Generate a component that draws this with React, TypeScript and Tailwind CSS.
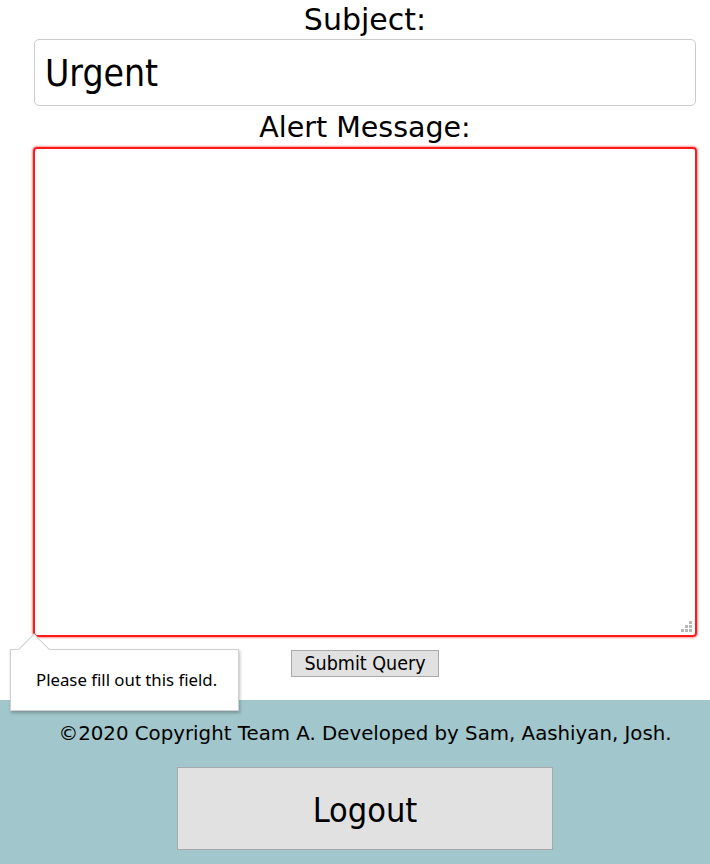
import React from 'react';

const App: React.FC = () => {
  return (
    <div className="min-h-[864px] bg-white font-['DejaVu_Sans',Verdana,sans-serif] text-black">
      <div className="relative flex flex-col items-center pl-[34px] pr-[14px]">
        <label className="mt-[3px] text-[30px] leading-[34px]">Subject:</label>
        <div className="mt-[2px] flex h-[67px] w-full items-center rounded-[5px] border border-[#cccccc] px-[10px] pt-[3px] font-['DejaVu_Sans_Condensed','DejaVu_Sans',sans-serif] text-[37px]">
          Urgent
        </div>
        <label className="mt-[3px] text-[28.5px] leading-[38px]">Alert Message:</label>
        <div className="relative mt-0 h-[490px] w-[664px] -ml-[1px] -mr-[1px] rounded-[4px] border-2 border-[#ff1a1a] shadow-[0_0_2px_1px_#ff9a9a]">
          <svg className="absolute bottom-[2px] right-[2px]" width="12" height="12" viewBox="0 0 12 12">
            <rect x="8" y="0" width="3" height="3" fill="#b8b8b8" />
            <rect x="4" y="4" width="3" height="3" fill="#b8b8b8" />
            <rect x="8" y="4" width="3" height="3" fill="#b8b8b8" />
            <rect x="0" y="8" width="3" height="3" fill="#b8b8b8" />
            <rect x="4" y="8" width="3" height="3" fill="#b8b8b8" />
            <rect x="8" y="8" width="3" height="3" fill="#b8b8b8" />
          </svg>
        </div>
        <button className="mt-[13px] mb-[23px] h-[27px] w-[148px] border border-[#a9a9a9] bg-[#e1e1e1] font-['DejaVu_Sans_Condensed','DejaVu_Sans',sans-serif] text-[19.5px] leading-[24px]">
          Submit Query
        </button>

        <div className="absolute left-[10px] top-[649px] z-10 flex h-[62px] w-[229px] items-center border border-[#cfcfcf] bg-white pl-[25px] font-['Noto_Sans','Open_Sans',sans-serif] text-[16.8px] shadow-[1px_2px_3px_rgba(0,0,0,0.25)]">
          Please fill out this field.
          <div className="absolute -top-[12px] left-[12px] h-[22px] w-[22px] rotate-45 border-l border-t border-[#cfcfcf] bg-white" />
        </div>
      </div>

      <footer className="flex h-[164px] flex-col items-center bg-[#a1c6cb] pl-[20px]">
        <p className="mt-[21px] text-[19.8px] leading-[26px]">
          ©2020 Copyright Team A. Developed by Sam, Aashiyan, Josh.
        </p>
        <button className="mt-[20px] h-[83px] w-[376px] border border-[#a9a9a9] bg-[#e1e1e1] pt-[4px] font-['DejaVu_Sans_Condensed','DejaVu_Sans',sans-serif] text-[34px]">
          Logout
        </button>
      </footer>
    </div>
  );
};

export default App;
